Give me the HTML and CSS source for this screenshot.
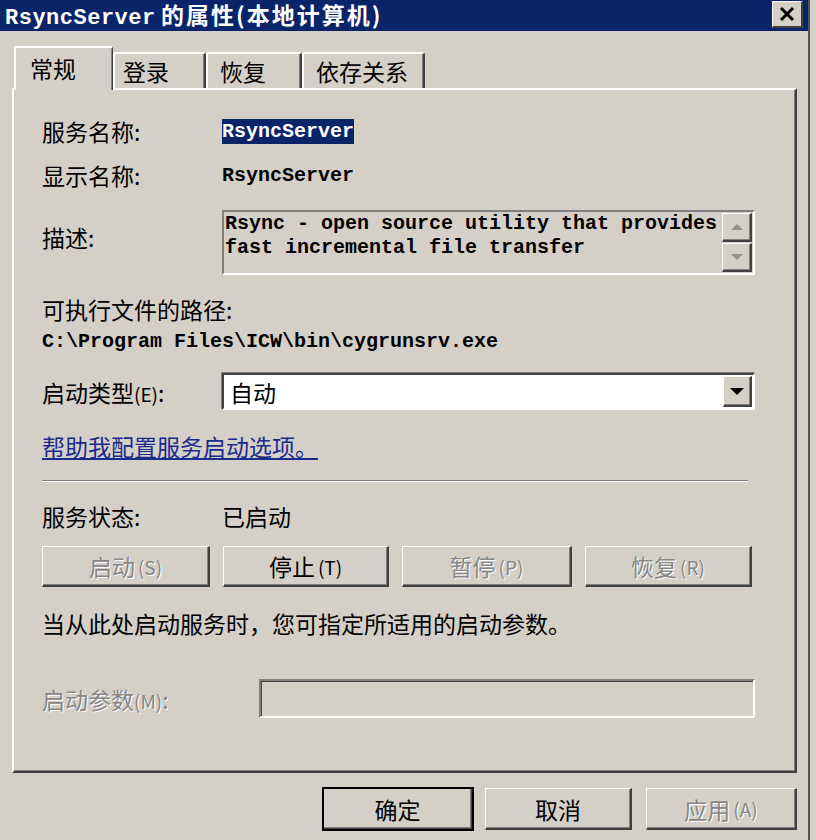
FILE: index.html
```html
<!DOCTYPE html>
<html lang="zh-CN">

<head>
  <meta charset="UTF-8">
  <title>RsyncServer 的属性(本地计算机)</title>
  <link rel="stylesheet" href="styles.css">
</head>

<body>
  <div class="window">
    <div class="titlebar">
      <span class="title"><span class="title-en">RsyncServer</span> <span class="title-cn">的属性(本地计算机)</span></span>
      <span class="close">
        <svg width="18" height="16" viewBox="0 0 18 16">
          <path d="M3 2 L15 14 M15 2 L3 14" stroke="#000" stroke-width="3" fill="none"/>
        </svg>
      </span>
    </div>

    <div class="tabs">
      <div class="tab active">常规</div>
      <div class="tab tab-login">登录</div>
      <div class="tab tab-recover">恢复</div>
      <div class="tab tab-deps">依存关系</div>
    </div>

    <div class="panel">
      <div class="row r-name">
        <div class="label">服务名称:</div>
        <div class="mono"><span class="selected">RsyncServer</span></div>
      </div>
      <div class="row r-display">
        <div class="label">显示名称:</div>
        <div class="mono">RsyncServer</div>
      </div>
      <div class="row r-desc">
        <div class="label">描述:</div>
        <div class="descbox">
          <div class="desctext mono">Rsync - open source utility that provides fast incremental file transfer</div>
          <div class="scroll">
            <div class="sbtn"><span class="arr up"></span></div>
            <div class="sbtn"><span class="arr down"></span></div>
          </div>
        </div>
      </div>
      <div class="row r-pathlabel">
        <div>可执行文件的路径:</div>
      </div>
      <div class="row r-path">
        <div class="mono">C:\Program Files\ICW\bin\cygrunsrv.exe</div>
      </div>
      <div class="row r-type">
        <div class="label">启动类型<span class="key">(E)</span>:</div>
        <div class="select">
          <span class="select-val">自动</span>
          <span class="select-btn"><span class="arr-black"></span></span>
        </div>
      </div>
      <div class="row r-link">
        <a href="#" class="link">帮助我配置服务启动选项。</a>
      </div>
      <div class="sep"></div>
      <div class="row r-status">
        <div class="label">服务状态:</div>
        <div>已启动</div>
      </div>
      <div class="btnrow">
        <div class="btn disabled">启动<span class="key">(S)</span></div>
        <div class="btn">停止<span class="key">(T)</span></div>
        <div class="btn disabled">暂停<span class="key">(P)</span></div>
        <div class="btn disabled">恢复<span class="key">(R)</span></div>
      </div>
      <div class="row r-hint">
        <div>当从此处启动服务时，您可指定所适用的启动参数。</div>
      </div>
      <div class="row r-param">
        <div class="label label-param disabled-text">启动参数<span class="key">(M)</span>:</div>
        <div class="input"></div>
      </div>
    </div>

    <div class="actions">
      <div class="btn big default">确定</div>
      <div class="btn big cancel">取消</div>
      <div class="btn big apply disabled">应用<span class="key">(A)</span></div>
    </div>
  </div>
</body>

</html>
```

FILE: styles.css
```css
* {
  box-sizing: border-box;
}

body {
  margin: 0;
  background-color: #d4d0c8;
  font-family: "Noto Sans CJK SC", sans-serif;
  font-size: 23px;
  color: #000;
}

.window {
  width: 810px;
  height: 840px;
  border-right: 2px solid #555;
  background-color: #d4d0c8;
}

/* title bar */
.titlebar {
  height: 31px;
  background-color: #0a246a;
  display: flex;
  align-items: center;
  justify-content: space-between;
  padding: 2px 5px 0 5px;
}

.title {
  color: #fff;
  font-weight: bold;
  font-size: 23px;
  line-height: 28px;
  white-space: nowrap;
}

.title-en {
  font-family: "Liberation Mono", monospace;
  font-size: 22px;
  letter-spacing: 0.5px;
}

.title-cn {
  letter-spacing: 2px;
}

.close {
  width: 31px;
  height: 27px;
  margin-top: -5px;
  background-color: #d4d0c8;
  border-top: 1px solid #fff;
  border-left: 1px solid #fff;
  border-right: 2px solid #404040;
  border-bottom: 2px solid #404040;
  display: flex;
  align-items: center;
  justify-content: center;
}

/* tabs */
.tabs {
  display: flex;
  align-items: flex-end;
  margin: 15px 0 0 14px;
  height: 42px;
  position: relative;
  z-index: 1;
}

.tab {
  height: 36px;
  padding-left: 12px;
  line-height: 34px;
  border-top: 2px solid #fff;
  border-left: 2px solid #fff;
  border-right: 2px solid #404040;
  box-shadow: inset -1px 0 0 #808080;
  border-radius: 3px 3px 0 0;
  background-color: #d4d0c8;
}

.tab.active {
  height: 44px;
  width: 99px;
  padding-left: 14px;
  line-height: 40px;
  margin-bottom: -2px;
  border-right-width: 1px;
}

.tab-login {
  width: 93px;
  padding-left: 8px;
}

.tab-recover {
  width: 96px;
}

.tab-deps {
  width: 123px;
}

/* panel */
.panel {
  margin-left: 12px;
  width: 785px;
  height: 685px;
  border-top: 2px solid #fff;
  border-left: 2px solid #fff;
  border-right: 2px solid #404040;
  border-bottom: 2px solid #404040;
  box-shadow: inset -1px -1px 0 #808080;
  padding: 27px 40px 0 28px;
}

.row {
  display: flex;
  align-items: center;
  height: 28px;
  white-space: nowrap;
}

.label {
  width: 180px;
  flex: none;
}

.key {
  font-size: 19px;
}

.mono {
  font-family: "Liberation Mono", monospace;
  font-size: 20px;
  font-weight: bold;
}

.selected {
  background-color: #0a246a;
  color: #fff;
  padding: 1px 0;
}

.r-display {
  margin-top: 16px;
}

.r-desc {
  margin-top: 21px;
  height: 65px;
  align-items: flex-start;
}

.r-desc .label {
  margin-top: 10px;
}

.descbox {
  flex: 1;
  height: 65px;
  display: flex;
  border-top: 2px solid #808080;
  border-left: 2px solid #808080;
  border-right: 2px solid #fff;
  border-bottom: 2px solid #fff;
}

.desctext {
  flex: 1;
  white-space: normal;
  line-height: 24px;
  padding: 0 0 0 1px;
}

.scroll {
  width: 31px;
  display: flex;
  flex-direction: column;
  gap: 1px;
  padding: 1px 1px 1px 0;
}

.sbtn {
  flex: 1;
  border-top: 1px solid #fff;
  border-left: 1px solid #fff;
  border-right: 2px solid #404040;
  border-bottom: 2px solid #404040;
  box-shadow: inset -1px -1px 0 #808080;
  display: flex;
  align-items: center;
  justify-content: center;
}

.arr {
  width: 0;
  height: 0;
  border-left: 6px solid transparent;
  border-right: 6px solid transparent;
}

.arr.up {
  border-bottom: 6px solid #909090;
}

.arr.down {
  border-top: 6px solid #909090;
}

.r-pathlabel {
  margin-top: 20px;
}

.r-path {
  margin-top: 4px;
}

.r-type {
  margin-top: 18px;
  height: 37px;
}

.select {
  flex: 1;
  height: 37px;
  background-color: #fff;
  border-top: 2px solid #404040;
  border-left: 2px solid #404040;
  border-right: 2px solid #fff;
  border-bottom: 2px solid #fff;
  box-shadow: -1px -1px 0 #808080;
  display: flex;
  align-items: center;
  justify-content: space-between;
  padding: 1px 1px 1px 6px;
}

.select-btn {
  width: 29px;
  height: 31px;
  background-color: #d4d0c8;
  border-top: 1px solid #fff;
  border-left: 1px solid #fff;
  border-right: 2px solid #404040;
  border-bottom: 2px solid #404040;
  box-shadow: inset -1px -1px 0 #808080;
  display: flex;
  align-items: center;
  justify-content: center;
}

.arr-black {
  width: 0;
  height: 0;
  border-left: 7px solid transparent;
  border-right: 7px solid transparent;
  border-top: 7px solid #000;
}

.r-link {
  margin-top: 22px;
}

.link {
  color: #1c2a8c;
  text-decoration: underline;
}

.sep {
  margin-top: 20px;
  width: 706px;
  height: 2px;
  border-top: 1px solid #808080;
  border-bottom: 1px solid #fff;
}

.r-status {
  margin-top: 20px;
}

.btnrow {
  margin-top: 16px;
  display: grid;
  grid-template-columns: 168px 166px 170px 167px;
  column-gap: 13px;
}

.btn {
  height: 41px;
  background-color: #d4d0c8;
  border-top: 1px solid #fff;
  border-left: 1px solid #fff;
  border-right: 2px solid #404040;
  border-bottom: 2px solid #404040;
  box-shadow: inset -1px -1px 0 #808080;
  display: flex;
  align-items: center;
  justify-content: center;
  white-space: nowrap;
}

.btn .key {
  margin-left: 3px;
}

.btn.disabled,
.disabled-text {
  color: #868686;
  text-shadow: 1px 1px 0 #fff;
}

.r-hint {
  margin-top: 22px;
}

.r-param {
  margin-top: 42px;
  height: 39px;
}

.label-param {
  width: 217px;
}

.input {
  flex: 1;
  height: 39px;
  border-top: 2px solid #808080;
  border-left: 2px solid #808080;
  border-right: 2px solid #fff;
  border-bottom: 2px solid #fff;
  box-shadow: inset 1px 1px 0 #404040;
}

/* dialog buttons */
.actions {
  display: flex;
  margin: 15px 0 0 323px;
  gap: 12px;
}

.btn.big {
  height: 42px;
}

.default {
  width: 150px;
  outline: 2px solid #000;
  outline-offset: -1px;
}

.cancel {
  width: 147px;
}

.apply {
  width: 151px;
  margin-left: 2px;
}
```
